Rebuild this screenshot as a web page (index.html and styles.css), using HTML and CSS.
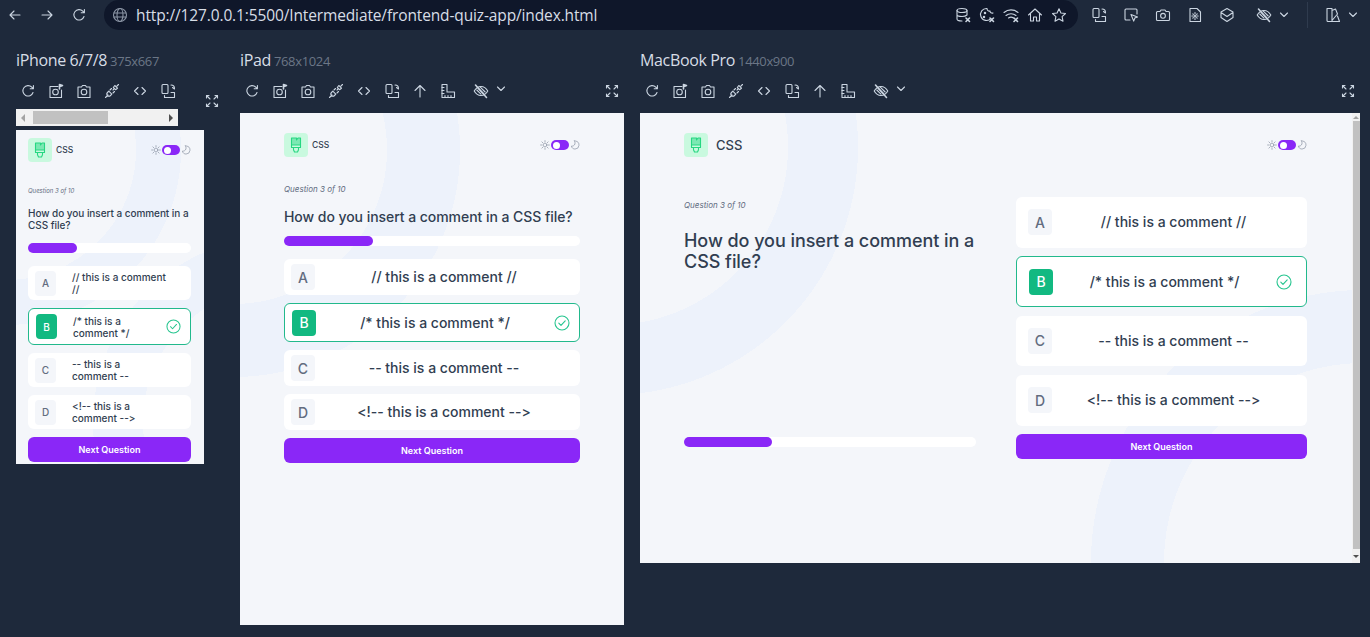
FILE: index.html
```html
<!DOCTYPE html>
<html lang="en">
<head>
    <meta charset="UTF-8" />
    <title>Responsive Viewer</title>
    <link rel="stylesheet" href="styles.css">
</head>
<body>

<!-- icon set -->
<svg class="icon-defs" xmlns="http://www.w3.org/2000/svg">
    <symbol id="i-back" viewBox="0 0 16 16"><path d="M13 8H3M7 4 3 8l4 4"/></symbol>
    <symbol id="i-forward" viewBox="0 0 16 16"><path d="M3 8h10M9 4l4 4-4 4"/></symbol>
    <symbol id="i-reload" viewBox="0 0 16 16"><path d="M13 9.500A5.200 5.200 0 1 1 11.800 4.200L13.200 5.600M13.400 2.600v3.200h-3.200"/></symbol>
    <symbol id="i-globe" viewBox="0 0 16 16"><circle cx="8" cy="8" r="6.500"/><ellipse cx="8" cy="8" rx="3" ry="6.500"/><path d="M2 6h12M2 10h12"/></symbol>
    <symbol id="i-db-x" viewBox="0 0 16 16"><ellipse cx="7" cy="3.500" rx="5" ry="2"/><path d="M2 3.500v8.500c0 1 2 2 5 2M12 3.500V8M2 7.500c0 1 2 2 5 2s4-.5 5-1.500"/><path class="strong" d="m11 11 3.500 3.500m0-3.500L11 14.500"/></symbol>
    <symbol id="i-cookie-x" viewBox="0 0 16 16"><path d="M8 1.500a6 6 0 1 0 4 10M8 1.500c0 2 1.500 3 3 2.500 0 1.500 1.500 2.500 3 2"/><circle cx="6" cy="6" r=".7"/><circle cx="5" cy="10" r=".7"/><path class="strong" d="m11 11 3.500 3.500m0-3.500L11 14.500"/></symbol>
    <symbol id="i-wifi-x" viewBox="0 0 16 16"><path d="M1 5.500c4-3.500 10-3.500 14 0M3 8.500c2.800-2.300 7.200-2.300 10 0M5.500 11c1.500-1 3.500-1 5 0"/><path class="strong" d="m11 11 3.500 3.500m0-3.500L11 14.500"/></symbol>
    <symbol id="i-home" viewBox="0 0 16 16"><path d="M1.500 8 8 2l6.500 6M3.500 7v7h3V10h3v4h3V7"/></symbol>
    <symbol id="i-star" viewBox="0 0 16 16"><path d="m8 1.800 1.900 4.200 4.600.5-3.400 3.100.9 4.600L8 11.900l-4 2.300.9-4.600L1.500 6.500 6.100 6z"/></symbol>
    <symbol id="i-rotate" viewBox="0 0 16 16"><rect x="2" y="1.500" width="6" height="9" rx="1"/><path d="M11 9.500h3.500v5H4.500V12.500M11 2c2 0 3.500 1.500 3.500 3.500M12.500 4.500l2 1.500"/></symbol>
    <symbol id="i-inspect" viewBox="0 0 16 16"><path d="M7 13H3a1 1 0 0 1-1-1V3a1 1 0 0 1 1-1h10a1 1 0 0 1 1 1v4"/><path d="m8 7.500 6.500 2.500-2.700 1.100-1.100 3z"/></symbol>
    <symbol id="i-camera" viewBox="0 0 16 16"><path d="M2.500 4.500H5L6 3h4l1 1.500h2.500a1 1 0 0 1 1 1v7a1 1 0 0 1-1 1h-11a1 1 0 0 1-1-1v-7a1 1 0 0 1 1-1z"/><circle cx="8" cy="8.800" r="2.400"/></symbol>
    <symbol id="i-camera-square" viewBox="0 0 16 16"><path d="M2 4h3.500l1-1.500h3l1 1.500H14v10.500H2z"/><circle cx="8" cy="9" r="2.800"/></symbol>
    <symbol id="i-camera-flag" viewBox="0 0 16 16"><path d="M10 3.500H2v11h11.500V7"/><circle cx="7.500" cy="9" r="2.800"/><path class="strong" d="M11.500 6V1.500l3 1-3 1.200"/></symbol>
    <symbol id="i-file" viewBox="0 0 16 16"><path d="M3 1.500h7l3.500 3.500v9.500H3z"/><circle cx="8" cy="9" r="1"/><path d="M8 5.500v1M8 11.500v1M4.800 9h1M10.200 9h1M5.800 6.800l.6.6M9.600 10.600l.6.6M10.200 6.800l-.6.6M6.400 10.600l-.6.6"/></symbol>
    <symbol id="i-layers" viewBox="0 0 16 16"><path d="m8 1.500 6 3.500v5.500l-6 4-6-4V5zM2 5.500l6 4 6-4"/></symbol>
    <symbol id="i-eye-off" viewBox="0 0 16 16"><path d="M1.200 8S3.800 3.500 8 3.500 14.800 8 14.800 8 12.200 12.500 8 12.500 1.200 8 1.200 8z"/><path d="m5 5 6 6M3.800 7 8 11.200M7 3.800 12.200 9"/><path class="strong" d="M2.500 2 13.500 14.500"/></symbol>
    <symbol id="i-chevron" viewBox="0 0 16 16"><path d="m4.500 6 3.500 3.500L11.500 6"/></symbol>
    <symbol id="i-theme" viewBox="0 0 16 16"><path d="M2 1.500h5v13H3a1 1 0 0 1-1-1zM7 3.500l3.500-1.500 2 5L7 13.500M7 14.500h7.500l-2-5.500"/></symbol>
    <symbol id="i-plug" viewBox="0 0 16 16"><path d="m1.500 14.500 2.500-2.500M4.800 8.200 7.800 11.200 6.500 12.500a2 2 0 0 1-3-3zM6 7l1.500-1.500M9 10l1.500-1.500"/><path d="m9 7 1.200-1.200M10.800 2.500l2.700 2.700-2 1.500-2.200-2.200zM13 3l1.500-1.500"/></symbol>
    <symbol id="i-code" viewBox="0 0 16 16"><path d="M6 4.500 2.500 8 6 11.500M10 4.500 13.500 8 10 11.500"/></symbol>
    <symbol id="i-up" viewBox="0 0 16 16"><path d="M8 14V2.500M3 7.500l5-5 5 5"/></symbol>
    <symbol id="i-ruler" viewBox="0 0 16 16"><path d="M2 1.500h5V9h7.500v5.500H2z"/><path d="M2 4.500h2M2 7.500h2M2 10.500h2M5 14.500v-2M8 14.500v-2M11 14.500v-2"/></symbol>
    <symbol id="i-expand" viewBox="0 0 16 16"><path d="M6 6 2.500 2.500M2.500 5V2.500H5M10 6l3.500-3.500M11 2.500h2.500V5M6 10l-3.500 3.500M2.500 11v2.500H5M10 10l3.500 3.500M13.500 11v2.500H11"/></symbol>
    <symbol id="i-sun" viewBox="0 0 16 16"><circle cx="8" cy="8" r="3"/><path d="M8 1v2M8 13v2M1 8h2M13 8h2M3 3l1.400 1.400M11.600 11.600 13 13M13 3l-1.400 1.400M4.400 11.600 3 13"/></symbol>
    <symbol id="i-moon" viewBox="0 0 16 16"><path d="M7 1.500c1.500 2 1.500 4.500 0 6.500-1 1.300-2.800 2-4.800 1.800.7 2.900 3 4.700 5.800 4.700a6.500 6.500 0 0 0 1-12.900z"/></symbol>
    <symbol id="i-brush" viewBox="0 0 16 16"><path class="brush-head" d="M3.500 1h9v7h-9z"/><path d="M3.500 1h5v2l1.500-2h2.500v9.500h-9zM3.500 8h9M5.500 10.500v2.200l1 2.300h3l1-2.300v-2.200"/></symbol>
    <symbol id="i-check" viewBox="0 0 16 16"><circle cx="8" cy="8" r="7"/><path d="m4.800 8.200 2.200 2.200 4.200-4.600"/></symbol>
</svg>

<!-- top bar -->
<header class="topbar">
    <div class="nav-buttons">
        <svg class="icon"><use href="#i-back"/></svg>
        <svg class="icon"><use href="#i-forward"/></svg>
        <svg class="icon"><use href="#i-reload"/></svg>
    </div>
    <div class="address-bar">
        <svg class="icon icon-globe"><use href="#i-globe"/></svg>
        <span class="address-url">http://127.0.0.1:5500/Intermediate/frontend-quiz-app/index.html</span>
        <div class="address-tools">
            <svg class="icon"><use href="#i-db-x"/></svg>
            <svg class="icon"><use href="#i-cookie-x"/></svg>
            <svg class="icon"><use href="#i-wifi-x"/></svg>
            <svg class="icon"><use href="#i-home"/></svg>
            <svg class="icon"><use href="#i-star"/></svg>
        </div>
    </div>
    <div class="main-tools">
        <svg class="icon"><use href="#i-rotate"/></svg>
        <svg class="icon"><use href="#i-inspect"/></svg>
        <svg class="icon"><use href="#i-camera"/></svg>
        <svg class="icon"><use href="#i-file"/></svg>
        <svg class="icon"><use href="#i-layers"/></svg>
        <svg class="icon icon-eye"><use href="#i-eye-off"/></svg>
        <svg class="icon icon-chevron"><use href="#i-chevron"/></svg>
        <span class="tools-divider"></span>
        <svg class="icon"><use href="#i-theme"/></svg>
        <svg class="icon icon-chevron"><use href="#i-chevron"/></svg>
    </div>
</header>

<main class="devices">

    <!-- iPhone -->
    <section class="device device-phone">
        <h2 class="device-title">iPhone 6/7/8<small>375x667</small></h2>
        <div class="device-toolbar">
            <svg class="icon"><use href="#i-reload"/></svg>
            <svg class="icon"><use href="#i-camera-flag"/></svg>
            <svg class="icon"><use href="#i-camera-square"/></svg>
            <svg class="icon"><use href="#i-plug"/></svg>
            <svg class="icon"><use href="#i-code"/></svg>
            <svg class="icon"><use href="#i-rotate"/></svg>
            <svg class="icon icon-expand"><use href="#i-expand"/></svg>
        </div>
        <div class="h-scrollbar">
            <span class="arrow-left"></span>
            <span class="h-thumb"></span>
            <span class="arrow-right"></span>
        </div>
        <div class="screen">
            <div class="quiz">
                <div class="quiz-header">
                    <div class="logo">
                        <span class="logo-box"><svg class="brush"><use href="#i-brush"/></svg></span>
                        <span class="logo-name">CSS</span>
                    </div>
                    <div class="theme-toggle">
                        <svg class="toggle-icon"><use href="#i-sun"/></svg>
                        <span class="toggle-pill"><span class="toggle-knob"></span></span>
                        <svg class="toggle-icon"><use href="#i-moon"/></svg>
                    </div>
                </div>
                <div class="quiz-body">
                    <div class="question">
                        <p class="question-count">Question 3 of 10</p>
                        <h3 class="question-text">How do you insert a comment in a CSS file?</h3>
                        <div class="progress"><div class="progress-bar"></div></div>
                    </div>
                    <div class="answers">
                        <div class="option">
                            <span class="option-letter">A</span>
                            <span class="option-text">// this is a comment<br>//</span>
                        </div>
                        <div class="option selected">
                            <span class="option-letter">B</span>
                            <span class="option-text">/* this is a<br>comment */</span>
                            <svg class="check"><use href="#i-check"/></svg>
                        </div>
                        <div class="option">
                            <span class="option-letter">C</span>
                            <span class="option-text">-- this is a<br>comment --</span>
                        </div>
                        <div class="option">
                            <span class="option-letter">D</span>
                            <span class="option-text">&lt;!-- this is a<br>comment --&gt;</span>
                        </div>
                        <button class="next-btn">Next Question</button>
                    </div>
                </div>
            </div>
        </div>
    </section>

    <!-- iPad -->
    <section class="device device-tablet">
        <h2 class="device-title">iPad<small>768x1024</small></h2>
        <div class="device-toolbar">
            <svg class="icon"><use href="#i-reload"/></svg>
            <svg class="icon"><use href="#i-camera-flag"/></svg>
            <svg class="icon"><use href="#i-camera-square"/></svg>
            <svg class="icon"><use href="#i-plug"/></svg>
            <svg class="icon"><use href="#i-code"/></svg>
            <svg class="icon"><use href="#i-rotate"/></svg>
            <svg class="icon"><use href="#i-up"/></svg>
            <svg class="icon"><use href="#i-ruler"/></svg>
            <svg class="icon icon-eye"><use href="#i-eye-off"/></svg>
            <svg class="icon icon-chevron"><use href="#i-chevron"/></svg>
            <svg class="icon icon-expand"><use href="#i-expand"/></svg>
        </div>
        <div class="screen">
            <div class="quiz">
                <div class="quiz-header">
                    <div class="logo">
                        <span class="logo-box"><svg class="brush"><use href="#i-brush"/></svg></span>
                        <span class="logo-name">CSS</span>
                    </div>
                    <div class="theme-toggle">
                        <svg class="toggle-icon"><use href="#i-sun"/></svg>
                        <span class="toggle-pill"><span class="toggle-knob"></span></span>
                        <svg class="toggle-icon"><use href="#i-moon"/></svg>
                    </div>
                </div>
                <div class="quiz-body">
                    <div class="question">
                        <p class="question-count">Question 3 of 10</p>
                        <h3 class="question-text">How do you insert a comment in a CSS file?</h3>
                        <div class="progress"><div class="progress-bar"></div></div>
                    </div>
                    <div class="answers">
                        <div class="option">
                            <span class="option-letter">A</span>
                            <span class="option-text">// this is a comment //</span>
                        </div>
                        <div class="option selected">
                            <span class="option-letter">B</span>
                            <span class="option-text">/* this is a comment */</span>
                            <svg class="check"><use href="#i-check"/></svg>
                        </div>
                        <div class="option">
                            <span class="option-letter">C</span>
                            <span class="option-text">-- this is a comment --</span>
                        </div>
                        <div class="option">
                            <span class="option-letter">D</span>
                            <span class="option-text">&lt;!-- this is a comment --&gt;</span>
                        </div>
                        <button class="next-btn">Next Question</button>
                    </div>
                </div>
            </div>
        </div>
    </section>

    <!-- MacBook -->
    <section class="device device-laptop">
        <h2 class="device-title">MacBook Pro<small>1440x900</small></h2>
        <div class="device-toolbar">
            <svg class="icon"><use href="#i-reload"/></svg>
            <svg class="icon"><use href="#i-camera-flag"/></svg>
            <svg class="icon"><use href="#i-camera-square"/></svg>
            <svg class="icon"><use href="#i-plug"/></svg>
            <svg class="icon"><use href="#i-code"/></svg>
            <svg class="icon"><use href="#i-rotate"/></svg>
            <svg class="icon"><use href="#i-up"/></svg>
            <svg class="icon"><use href="#i-ruler"/></svg>
            <svg class="icon icon-eye"><use href="#i-eye-off"/></svg>
            <svg class="icon icon-chevron"><use href="#i-chevron"/></svg>
            <svg class="icon icon-expand"><use href="#i-expand"/></svg>
        </div>
        <div class="screen">
            <div class="quiz">
                <div class="quiz-header">
                    <div class="logo">
                        <span class="logo-box"><svg class="brush"><use href="#i-brush"/></svg></span>
                        <span class="logo-name">CSS</span>
                    </div>
                    <div class="theme-toggle">
                        <svg class="toggle-icon"><use href="#i-sun"/></svg>
                        <span class="toggle-pill"><span class="toggle-knob"></span></span>
                        <svg class="toggle-icon"><use href="#i-moon"/></svg>
                    </div>
                </div>
                <div class="quiz-body">
                    <div class="question">
                        <p class="question-count">Question 3 of 10</p>
                        <h3 class="question-text">How do you insert a comment in a CSS file?</h3>
                        <div class="progress"><div class="progress-bar"></div></div>
                    </div>
                    <div class="answers">
                        <div class="option">
                            <span class="option-letter">A</span>
                            <span class="option-text">// this is a comment //</span>
                        </div>
                        <div class="option selected">
                            <span class="option-letter">B</span>
                            <span class="option-text">/* this is a comment */</span>
                            <svg class="check"><use href="#i-check"/></svg>
                        </div>
                        <div class="option">
                            <span class="option-letter">C</span>
                            <span class="option-text">-- this is a comment --</span>
                        </div>
                        <div class="option">
                            <span class="option-letter">D</span>
                            <span class="option-text">&lt;!-- this is a comment --&gt;</span>
                        </div>
                        <button class="next-btn">Next Question</button>
                    </div>
                </div>
            </div>
            <div class="v-scrollbar">
                <span class="arrow-up"></span>
                <span class="v-thumb"></span>
                <span class="arrow-down"></span>
            </div>
        </div>
    </section>

</main>

</body>
</html>
```

FILE: styles.css
```css
* {
    box-sizing: border-box;
}

html, body {
    height: 100%;
}

body {
    margin: 0;
    overflow: hidden;
    background: #1e293b;
    color: #cbd5e1;
    font-family: 'Inter', 'Liberation Sans', sans-serif;
    font-variant-ligatures: none;
    font-feature-settings: "calt" 0, "liga" 0;
}

.icon-defs {
    display: none;
}

svg {
    display: block;
    flex: none;
    fill: none;
    stroke: currentColor;
    stroke-width: 1.1;
    stroke-linecap: round;
    stroke-linejoin: round;
}

.icon {
    width: 16px;
    height: 16px;
}

.strong {
    stroke-width: 1.6;
}

/* top bar */
.topbar {
    display: flex;
    align-items: center;
    height: 30px;
    padding-left: 7px;
}

.nav-buttons {
    display: flex;
    gap: 16px;
    margin-right: 17px;
}

.address-bar {
    display: flex;
    align-items: center;
    width: 974px;
    height: 30px;
    padding: 0 11px 0 8px;
    background: #0f172a;
    border-radius: 15px;
}

.icon-globe {
    color: #8b95a5;
}

.address-url {
    margin-left: 8px;
    color: #d7dde6;
    font-family: 'Open Sans', sans-serif;
    font-size: 15.500px;
    letter-spacing: -0.13px;
    white-space: nowrap;
}

.address-tools {
    display: flex;
    gap: 8px;
    margin-left: auto;
}

.main-tools {
    display: flex;
    align-items: center;
    gap: 16px;
    margin-left: 13px;
}

.main-tools .icon-eye {
    margin-left: 5px;
}

.main-tools .icon-chevron {
    margin-left: -12px;
}

.tools-divider {
    width: 1px;
    height: 26px;
    margin: 0 1px 0 -1px;
    background: #2f3b4e;
}

/* device columns */
.devices {
    display: flex;
    gap: 16px;
    padding: 20px 0 0 16px;
}

.device-phone {
    width: 208px;
}

.device-tablet {
    width: 384px;
}

.device-laptop {
    width: 720px;
}

.device-title {
    height: 20px;
    margin: 0 0 13px;
    color: #d7dde6;
    font-family: 'Open Sans', sans-serif;
    font-size: 16px;
    font-weight: 400;
    line-height: 20px;
    letter-spacing: -0.35px;
}

.device-title small {
    margin-left: 3px;
    color: #6b7686;
    font-size: 13px;
}

.device-toolbar {
    display: flex;
    gap: 12px;
    height: 16px;
    margin-bottom: 14px;
    padding: 0 4px;
}

.device-toolbar .icon-eye {
    margin-left: 5px;
}

.device-toolbar .icon-chevron {
    margin-left: -8px;
    margin-top: -2px;
}

.icon-expand {
    margin-left: auto;
}

.device-phone .device-toolbar {
    margin-bottom: 10px;
}

.device-phone .icon-expand {
    margin-top: 10px;
}

/* scrollbars */
.h-scrollbar {
    display: flex;
    align-items: center;
    width: 162px;
    height: 17px;
    margin-bottom: 4px;
    padding: 0 5px;
    background: #f1f1f1;
}

.h-thumb {
    width: 75px;
    height: 13px;
    margin-left: 8px;
    background: #c1c1c1;
}

.arrow-left {
    border: 4px solid transparent;
    border-left: 0;
    border-right: 4px solid #a3a3a3;
}

.arrow-right {
    margin-left: auto;
    border: 4px solid transparent;
    border-right: 0;
    border-left: 4px solid #505050;
}

.v-scrollbar {
    display: flex;
    flex-direction: column;
    align-items: center;
    flex: none;
    width: 8px;
    padding: 3px 0;
    background: #f1f1f1;
}

.v-thumb {
    width: 7px;
    height: 428px;
    margin: 2px 0 6px;
    background: #c1c1c1;
}

.arrow-up {
    border: 3px solid transparent;
    border-top: 0;
    border-bottom: 3px solid #a3a3a3;
}

.arrow-down {
    border: 3px solid transparent;
    border-bottom: 0;
    border-top: 3px solid #505050;
}

/* device screens */
.screen {
    display: flex;
    background: #f4f6fa;
}

.device-phone .screen {
    width: 188px;
    height: 334px;
}

.device-tablet .screen {
    height: 512px;
}

.device-laptop .screen {
    height: 450px;
}

/* quiz page */
.quiz {
    display: flex;
    flex-direction: column;
    flex: 1;
    min-width: 0;
    color: #313e51;
}

.device-phone .quiz {
    padding: 8px 13px 0 12px;
    background-image:
        radial-gradient(circle at 262px 292px, transparent 135px, #edf2fb 135px, #edf2fb 185px, transparent 185px),
        radial-gradient(circle at -10px 20px, transparent 130px, #edf2fb 130px, #edf2fb 175px, transparent 175px);
}

.device-tablet .quiz {
    padding: 20px 44px 0;
    background-image: radial-gradient(circle at -7px 37px, transparent 154px, #edf2fb 154px, #edf2fb 227px, transparent 227px);
}

.device-laptop .quiz {
    padding: 20px 45px 0 44px;
    background-image:
        radial-gradient(circle at 724px 450px, transparent 200px, #edf2fb 200px, #edf2fb 273px, transparent 273px),
        radial-gradient(circle at -30px 34px, transparent 178px, #edf2fb 178px, #edf2fb 248px, transparent 248px);
}

.quiz-header {
    display: flex;
    justify-content: space-between;
    align-items: center;
    height: 24px;
}

.logo {
    display: flex;
    align-items: center;
    gap: 4px;
}

.logo-box {
    display: flex;
    align-items: center;
    justify-content: center;
    width: 24px;
    height: 24px;
    background: #c9f9df;
    border-radius: 4px;
}

.brush {
    width: 16px;
    height: 16px;
    color: #26d782;
}

.brush-head {
    fill: #7be8b3;
    stroke: none;
}

.logo-name {
    font-size: 8.500px;
    font-weight: 500;
}

.device-laptop .logo {
    gap: 8px;
}

.device-laptop .logo-name {
    font-size: 13px;
}

.theme-toggle {
    display: flex;
    align-items: center;
    gap: 1px;
}

.toggle-icon {
    width: 10px;
    height: 10px;
    color: #7d8698;
    stroke-width: 1;
}

.toggle-pill {
    display: flex;
    align-items: center;
    width: 18px;
    height: 10px;
    padding: 0 2px;
    background: #8a27f7;
    border-radius: 5px;
}

.toggle-knob {
    width: 7px;
    height: 7px;
    background: #fff;
    border-radius: 50%;
}

.question-count {
    margin: 0;
    color: #626c7f;
    font-size: 8px;
    font-style: italic;
    line-height: 10px;
}

.question-text {
    margin: 14px 0 11px;
    font-size: 14px;
    font-weight: 500;
    line-height: 17px;
    letter-spacing: -0.05px;
}

.progress {
    height: 10px;
    background: #fff;
    border-radius: 5px;
}

.progress-bar {
    width: 30%;
    height: 100%;
    background: #8a27f7;
    border-radius: 5px;
}

.answers {
    display: flex;
    flex-direction: column;
    gap: 8px;
}

.option {
    display: flex;
    align-items: center;
    height: 36px;
    padding: 0 7px;
    background: #fff;
    border-radius: 6px;
}

.option.selected {
    height: 39px;
    border: 1px solid #22b98c;
}

.option-letter {
    display: flex;
    align-items: center;
    justify-content: center;
    flex: none;
    width: 24px;
    height: 26px;
    color: #626c7f;
    background: #f4f6fa;
    border-radius: 4px;
    font-size: 14px;
    font-weight: 500;
}

.selected .option-letter {
    color: #fff;
    background: #12b981;
}

.option-text {
    flex: 1;
    font-size: 14px;
    font-weight: 500;
    line-height: 12px;
    text-align: center;
}

.check {
    width: 16px;
    height: 16px;
    margin-right: 2px;
    color: #26c58f;
}

.next-btn {
    display: block;
    width: 100%;
    height: 25px;
    padding: 0;
    color: #fff;
    background: #8a27f7;
    border: none;
    border-radius: 6px;
    font-family: inherit;
    font-size: 9px;
    font-weight: 600;
}

/* per device sizes */
.device-phone .question-count {
    margin-top: 25px;
    font-size: 6px;
    line-height: 8px;
}

.device-phone .question-text {
    margin: 12px 0;
    font-size: 10px;
    line-height: 12px;
}

.device-phone .answers {
    margin-top: 13px;
}

.device-phone .option {
    height: 34px;
}

.device-phone .option.selected {
    height: 37px;
}

.device-phone .option-letter {
    width: 21px;
    height: 25px;
    font-size: 10px;
}

.device-phone .option-text {
    padding-left: 16px;
    font-size: 10px;
    text-align: left;
}

.device-phone .check {
    width: 15px;
    height: 15px;
}

.device-tablet .question-count {
    margin-top: 27px;
}

.device-tablet .answers {
    margin-top: 13px;
}

.device-laptop .quiz-body {
    display: grid;
    grid-template-columns: 292px 291px;
    column-gap: 40px;
    margin-top: 40px;
}

.device-laptop .question {
    display: flex;
    flex-direction: column;
}

.device-laptop .question-count {
    margin-top: 3px;
}

.device-laptop .question-text {
    margin: 20px 0 0;
    font-size: 18px;
    line-height: 21px;
}

.device-laptop .progress {
    margin: auto 0 12px;
}

.device-laptop .answers {
    gap: 8.500px;
}

.device-laptop .option,
.device-laptop .option.selected {
    height: 50.750px;
    padding: 0 12px;
}
```
